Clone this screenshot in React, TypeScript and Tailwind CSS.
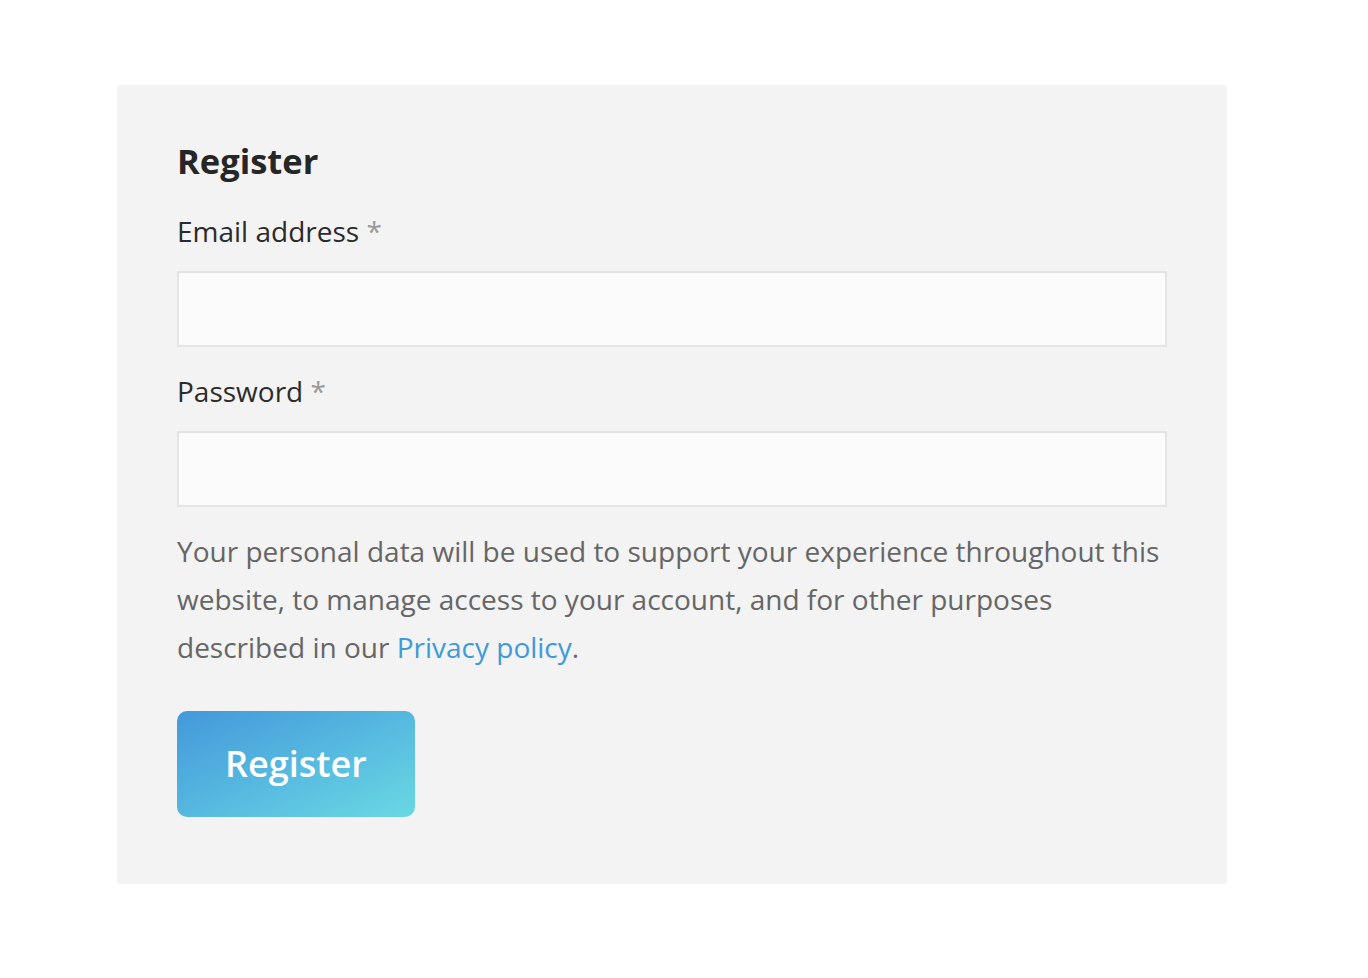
export default function App() {
  return (
    <div className="min-h-screen bg-white pt-[85px] pl-[117px] font-['Open_Sans',sans-serif]">
      <div className="w-[1110px] rounded-[4px] bg-[#f3f3f3] px-[60px] pt-[53px] pb-[67px]">
        <h2 className="text-[34.5px] font-bold leading-[46px] text-[#262626]">Register</h2>

        <form className="mt-[27px]" onSubmit={(e) => e.preventDefault()}>
          <label className="block text-[28px] leading-[40px] text-[#2b2b2b]">
            Email address <span className="text-[#9a9a9a]">*</span>
          </label>
          <input
            type="email"
            className="mt-[20px] block h-[76px] w-full border-2 border-[#e4e4e4] bg-[#fbfbfb] outline-none"
          />

          <label className="mt-[24px] block text-[28px] leading-[40px] text-[#2b2b2b]">
            Password <span className="text-[#9a9a9a]">*</span>
          </label>
          <input
            type="password"
            className="mt-[20px] block h-[76px] w-full border-2 border-[#e4e4e4] bg-[#fbfbfb] outline-none"
          />

          <p className="mt-[20px] text-[28px] leading-[48px] text-[#666666]">
            Your personal data will be used to support your experience throughout this website, to manage
            access to your account, and for other purposes described in our{' '}
            <a href="#" className="text-[#3f9ad8]">
              Privacy policy
            </a>
            .
          </p>

          <button
            type="submit"
            className="mt-[40px] flex h-[106px] w-[238px] items-center justify-center rounded-[10px] bg-gradient-to-br from-[#4498da] to-[#6ad8e3] text-[36px] font-semibold text-white"
          >
            Register
          </button>
        </form>
      </div>
    </div>
  );
}
